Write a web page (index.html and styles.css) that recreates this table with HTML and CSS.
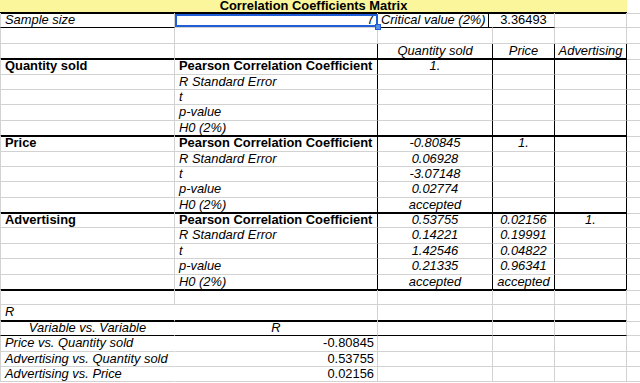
FILE: index.html
```html
<!DOCTYPE html>
<html>
<head>
<meta charset="utf-8">
<link rel="stylesheet" href="styles.css">
</head>
<body>
<div class="sheet">
  <div class="row title"><div class="ttl">Correlation Coefficients Matrix</div><div class="cell f"></div></div>

  <div class="row r1">
    <div class="cell a i kb">Sample size</div>
    <div class="cell b rt sel">7<span class="handle"></span></div>
    <div class="cell c i kb crit"><span class="critbox">Critical value (2%)</span></div>
    <div class="cell d ctr kb">3.36493</div>
    <div class="cell e"></div>
    <div class="cell f"></div>
  </div>
  <div class="row">
    <div class="cell a"></div><div class="cell b"></div><div class="cell c"></div><div class="cell d"></div><div class="cell e"></div><div class="cell f"></div>
  </div>
  <div class="row mx k2">
    <div class="cell a"></div><div class="cell b"></div>
    <div class="cell c i ctr">Quantity sold</div>
    <div class="cell d i ctr">Price</div>
    <div class="cell e i ctr">Advertising</div>
    <div class="cell f"></div>
  </div>

  <div class="row mx">
    <div class="cell a bd">Quantity sold</div><div class="cell b bd">Pearson Correlation Coefficient</div>
    <div class="cell c i ctr">1.</div><div class="cell d"></div><div class="cell e"></div><div class="cell f"></div>
  </div>
  <div class="row mx">
    <div class="cell a"></div><div class="cell b i">R Standard Error</div>
    <div class="cell c"></div><div class="cell d"></div><div class="cell e"></div><div class="cell f"></div>
  </div>
  <div class="row mx">
    <div class="cell a"></div><div class="cell b i">t</div>
    <div class="cell c"></div><div class="cell d"></div><div class="cell e"></div><div class="cell f"></div>
  </div>
  <div class="row mx">
    <div class="cell a"></div><div class="cell b i">p-value</div>
    <div class="cell c"></div><div class="cell d"></div><div class="cell e"></div><div class="cell f"></div>
  </div>
  <div class="row mx k2">
    <div class="cell a"></div><div class="cell b i">H0 (2%)</div>
    <div class="cell c"></div><div class="cell d"></div><div class="cell e"></div><div class="cell f"></div>
  </div>

  <div class="row mx">
    <div class="cell a bd">Price</div><div class="cell b bd">Pearson Correlation Coefficient</div>
    <div class="cell c i ctr">-0.80845</div><div class="cell d i ctr">1.</div><div class="cell e"></div><div class="cell f"></div>
  </div>
  <div class="row mx">
    <div class="cell a"></div><div class="cell b i">R Standard Error</div>
    <div class="cell c i ctr">0.06928</div><div class="cell d"></div><div class="cell e"></div><div class="cell f"></div>
  </div>
  <div class="row mx">
    <div class="cell a"></div><div class="cell b i">t</div>
    <div class="cell c i ctr">-3.07148</div><div class="cell d"></div><div class="cell e"></div><div class="cell f"></div>
  </div>
  <div class="row mx">
    <div class="cell a"></div><div class="cell b i">p-value</div>
    <div class="cell c i ctr">0.02774</div><div class="cell d"></div><div class="cell e"></div><div class="cell f"></div>
  </div>
  <div class="row mx k2">
    <div class="cell a"></div><div class="cell b i">H0 (2%)</div>
    <div class="cell c i ctr">accepted</div><div class="cell d"></div><div class="cell e"></div><div class="cell f"></div>
  </div>

  <div class="row mx">
    <div class="cell a bd">Advertising</div><div class="cell b bd">Pearson Correlation Coefficient</div>
    <div class="cell c i ctr">0.53755</div><div class="cell d i ctr">0.02156</div><div class="cell e i ctr">1.</div><div class="cell f"></div>
  </div>
  <div class="row mx">
    <div class="cell a"></div><div class="cell b i">R Standard Error</div>
    <div class="cell c i ctr">0.14221</div><div class="cell d i ctr">0.19991</div><div class="cell e"></div><div class="cell f"></div>
  </div>
  <div class="row mx">
    <div class="cell a"></div><div class="cell b i">t</div>
    <div class="cell c i ctr">1.42546</div><div class="cell d i ctr">0.04822</div><div class="cell e"></div><div class="cell f"></div>
  </div>
  <div class="row mx">
    <div class="cell a"></div><div class="cell b i">p-value</div>
    <div class="cell c i ctr">0.21335</div><div class="cell d i ctr">0.96341</div><div class="cell e"></div><div class="cell f"></div>
  </div>
  <div class="row mx k2">
    <div class="cell a"></div><div class="cell b i">H0 (2%)</div>
    <div class="cell c i ctr">accepted</div><div class="cell d i ctr">accepted</div><div class="cell e"></div><div class="cell f"></div>
  </div>

  <div class="row">
    <div class="cell a"></div><div class="cell b"></div><div class="cell c"></div><div class="cell d"></div><div class="cell e"></div><div class="cell f"></div>
  </div>
  <div class="row k2 open">
    <div class="cell a i">R</div><div class="cell b"></div><div class="cell c"></div><div class="cell d"></div><div class="cell e"></div><div class="cell f"></div>
  </div>
  <div class="row k1 open">
    <div class="cell a i ctr">Variable vs. Variable</div><div class="cell b i ctr">R</div><div class="cell c"></div><div class="cell d"></div><div class="cell e"></div><div class="cell f"></div>
  </div>
  <div class="row open">
    <div class="cell a i">Price vs. Quantity sold</div><div class="cell b rt">-0.80845</div><div class="cell c"></div><div class="cell d"></div><div class="cell e"></div><div class="cell f"></div>
  </div>
  <div class="row open">
    <div class="cell a i">Advertising vs. Quantity sold</div><div class="cell b rt">0.53755</div><div class="cell c"></div><div class="cell d"></div><div class="cell e"></div><div class="cell f"></div>
  </div>
  <div class="row open">
    <div class="cell a i">Advertising vs. Price</div><div class="cell b rt">0.02156</div><div class="cell c"></div><div class="cell d"></div><div class="cell e"></div><div class="cell f"></div>
  </div>
</div>
</body>
</html>
```
FILE: styles.css
```css
* { box-sizing: border-box; }
html, body { margin: 0; padding: 0; background: #fff; }
body {
  font-family: "Liberation Sans", Arial, sans-serif;
  font-size: 12.9px;
  color: #000;
  overflow: hidden;
}
.sheet { width: 640px; }
.row {
  display: grid;
  grid-template-columns: 175px 203px 115px 62px 72px 13px;
  height: 15.4px;
}
.row.title {
  grid-template-columns: 627px 13px;
  height: 13px;
}
.ttl {
  background: #fbf69c;
  border-bottom: 2px solid #000;
  font-weight: bold;
  text-align: center;
  line-height: 12px;
  white-space: nowrap;
}
.cell {
  border-right: 1px solid #d2d2d2;
  border-bottom: 1px solid #d2d2d2;
  line-height: 14.4px;
  padding: 0 4px;
  white-space: nowrap;
}
.cell.a { border-left: 1px solid #d2d2d2; }
.cell.f { border-right: none; }
.i { font-style: italic; }
.bd { font-weight: bold; }
.ctr { text-align: center; padding: 0; }
.rt { text-align: right; padding-right: 3px; }

.kb { border-bottom-color: #000; }
.crit { padding-left: 3px; border-right-color: transparent; }
.critbox {
  display: inline-block;
  width: 108px;
  border-right: 1px solid #000;
}

.sel { position: relative; }
.sel::after {
  content: "";
  position: absolute;
  left: 0;
  top: 1px;
  right: -1px;
  bottom: 0;
  border: 2px solid #1f5ed6;
}
.handle {
  position: absolute;
  right: -4px;
  bottom: -3px;
  width: 6px;
  height: 6px;
  background: #5b8fe2;
  border: 1px solid #1f5ed6;
  z-index: 2;
}

.mx > .b, .mx > .c, .mx > .d, .mx > .e { border-right-color: #000; }
.k1 > .cell:not(.f) { border-bottom-color: #000; }
.k2 > .cell:not(.f) { border-bottom: 2px solid #000; }
.open > .a { border-right-color: transparent; }
```
